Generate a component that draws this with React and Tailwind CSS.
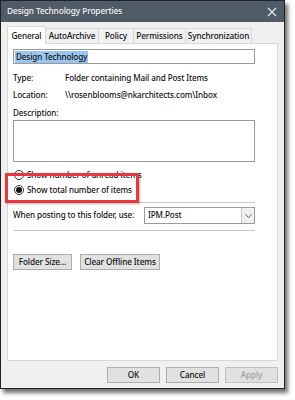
import React from "react";

const font = { fontFamily: '"Noto Sans", "Open Sans", sans-serif' };

const Tab = ({ label, active, w }) => (
  <div
    className={
      (active
        ? "relative z-10 -mb-px h-[18px] border border-b-0 border-[#d9d9d9] bg-white pt-[1px] leading-[16px] "
        : "mt-[2px] h-[15px] border border-b-0 border-l-0 border-[#d9d9d9] bg-[#f0f0f0] leading-[14px] ") +
      "text-center text-[8.2px] font-medium tracking-[-0.1px] text-[#111] " +
      w
    }
  >
    {label}
  </div>
);

const Button = ({ children, className = "" }) => (
  <div
    className={
      "flex h-[16px] items-center justify-center border border-[#adadad] bg-[#e1e1e1] text-[8.2px] font-medium tracking-[-0.1px] text-[#111] " +
      className
    }
  >
    {children}
  </div>
);

const Radio = ({ checked, label }) => (
  <div className="flex h-[14px] items-center gap-[3px]">
    <div className="flex h-[10px] w-[10px] items-center justify-center rounded-full border border-[#333] bg-white">
      {checked && <div className="h-[6px] w-[6px] rounded-full bg-[#111]" />}
    </div>
    <span>{label}</span>
  </div>
);

export default function App() {
  return (
    <div className="h-[400px] w-[295px] bg-white" style={font}>
      <div className="relative flex h-[389px] w-[285px] flex-col border border-[#1e2126] bg-[#f0f0f0] shadow-[3px_4px_4px_rgba(0,0,0,0.55)]">
        {/* Title bar */}
        <div className="flex h-[21px] items-center justify-between bg-[#505b68] pl-[6px] pr-[7px] text-[#f4f4f4]">
          <span className="text-[8.3px] font-medium tracking-[-0.1px]">Design Technology Properties</span>
          <svg width="10" height="10" viewBox="0 0 10 10">
            <path d="M1 1L9 9M9 1L1 9" stroke="#e8e8e8" strokeWidth="1.2" />
          </svg>
        </div>

        {/* Tabs */}
        <div className="mt-[4px] flex pl-[6px]">
          <Tab label="General" active w="w-[39px]" />
          <Tab label="AutoArchive" w="w-[53px]" />
          <Tab label="Policy" w="w-[35px]" />
          <Tab label="Permissions" w="w-[52px]" />
          <Tab label="Synchronization" w="w-[66px]" />
        </div>

        {/* Panel */}
        <div className="ml-[6px] mr-[6px] flex h-[318px] flex-col border border-[#d9d9d9] bg-white pl-[5px] pr-[22px] text-[8.1px] font-medium tracking-[-0.1px] text-[#111]">
          <div className="mt-[5px] flex h-[15px] items-center border border-[#9a9a9a] px-[1px]">
            <span className="bg-[#99c6ef] px-[1px] leading-[12px]">Design Technology</span>
          </div>

          <div className="mt-[6px] flex h-[16px] items-center">
            <span className="w-[52px]">Type:</span>
            <span>Folder containing Mail and Post Items</span>
          </div>
          <div className="mt-[1px] flex h-[16px] items-center">
            <span className="w-[52px]">Location:</span>
            <span>\\rosenblooms@nkarchitects.com\Inbox</span>
          </div>

          <div className="mt-[2px] flex h-[16px] items-center">Description:</div>
          <div className="mt-[-1px] h-[42px] border border-[#9a9a9a]" />

          <div className="mt-[6px] flex flex-col gap-[1px] pl-[1px]">
            <Radio label="Show number of unread items" />
            <Radio checked label="Show total number of items" />
          </div>

          <div className="mt-[5px] h-px bg-[#c8c8c8]" />

          <div className="mt-[4px] flex h-[17px] items-center justify-between">
            <span>When posting to this folder, use:</span>
            <div className="flex h-[17px] w-[111px] items-center border border-[#9a9a9a] pl-[3px]">
              <span className="flex-1">IPM.Post</span>
              <div className="flex h-[15px] w-[13px] items-center justify-center border-l border-[#c8c8c8] bg-[#f0f0f0]">
                <svg width="7" height="4" viewBox="0 0 7 4">
                  <path d="M0.5 0.5L3.5 3.5L6.5 0.5" stroke="#606060" fill="none" strokeWidth="1" />
                </svg>
              </div>
            </div>
          </div>

          <div className="mt-[6px] h-px bg-[#c8c8c8]" />

          <div className="mt-[23px] flex gap-[8px]">
            <Button className="w-[59px]">Folder Size...</Button>
            <Button className="w-[80px]">Clear Offline Items</Button>
          </div>
        </div>

        {/* Bottom buttons */}
        <div className="mt-[6px] flex justify-end gap-[6px] pr-[6px]">
          <Button className="w-[53px] border-[#0078d7]">OK</Button>
          <Button className="w-[53px]">Cancel</Button>
          <Button className="w-[53px] border-[#bfbfbf] bg-[#cccccc] text-[#a0a0a0]">Apply</Button>
        </div>

        {/* Annotation */}
        <div className="absolute left-[4px] top-[172px] h-[30px] w-[134px] border-[3px] border-[#e8383d] shadow-[1px_1px_2px_rgba(0,0,0,0.3)]" />
      </div>
    </div>
  );
}
